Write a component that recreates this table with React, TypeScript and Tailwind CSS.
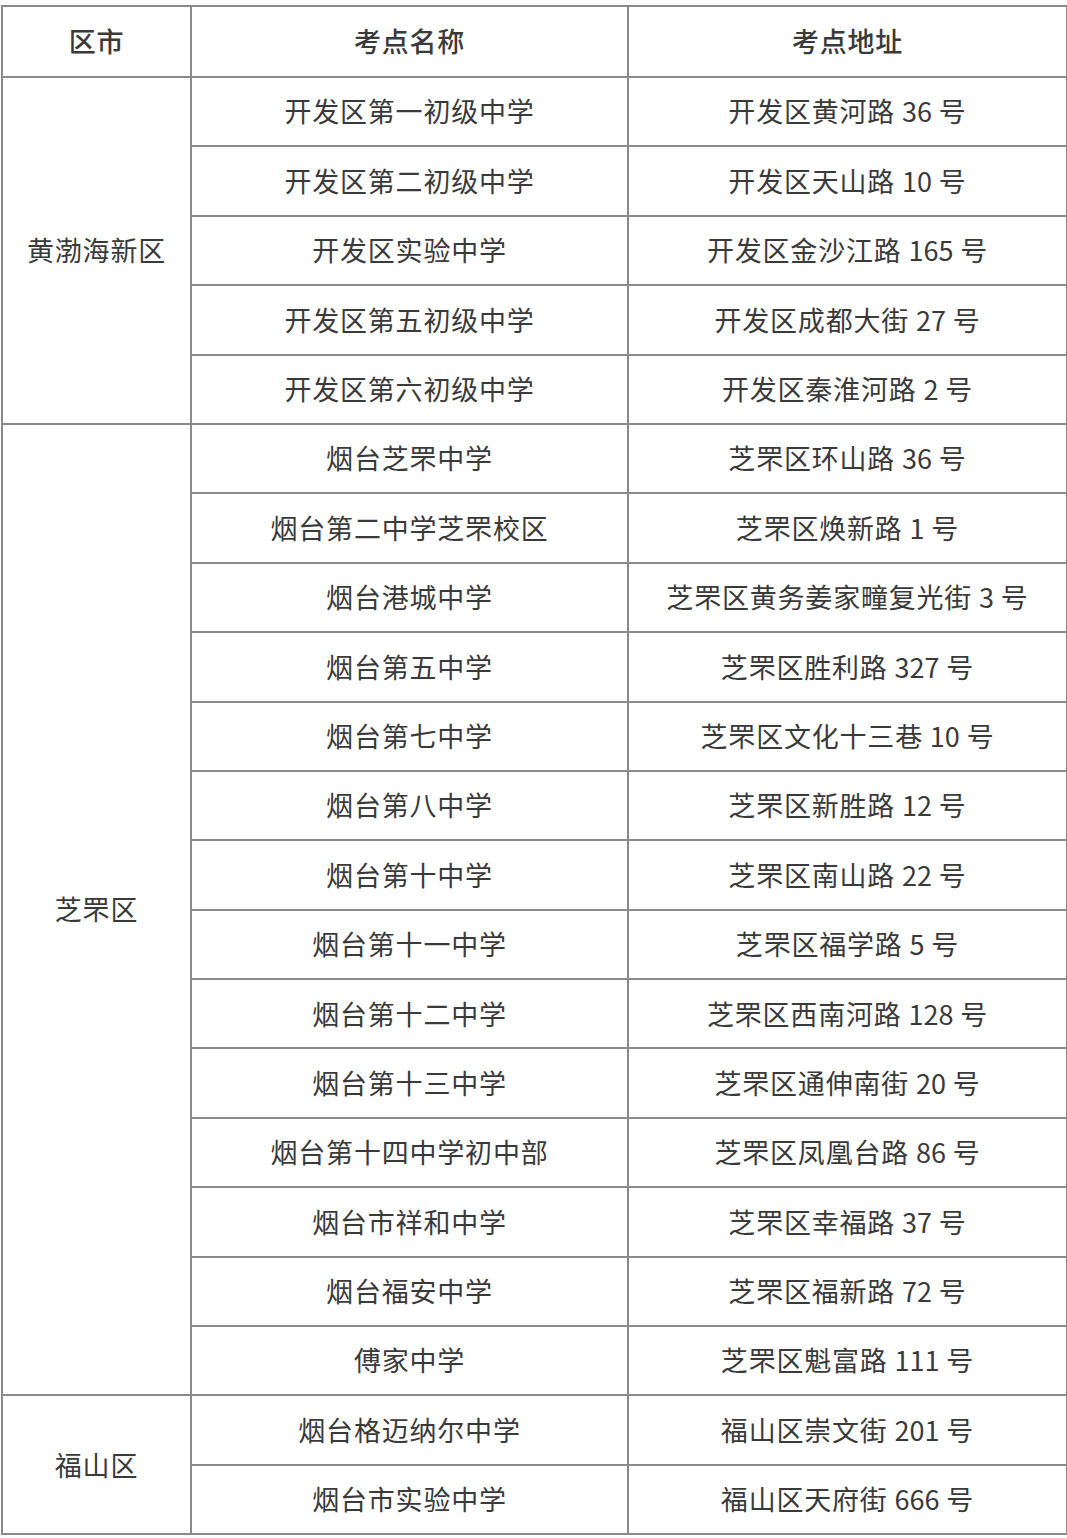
import React from "react";

const groups: { name: string; rows: [string, string][] }[] = [
  {
    name: "黄渤海新区",
    rows: [
      ["开发区第一初级中学", "开发区黄河路 36 号"],
      ["开发区第二初级中学", "开发区天山路 10 号"],
      ["开发区实验中学", "开发区金沙江路 165 号"],
      ["开发区第五初级中学", "开发区成都大街 27 号"],
      ["开发区第六初级中学", "开发区秦淮河路 2 号"],
    ],
  },
  {
    name: "芝罘区",
    rows: [
      ["烟台芝罘中学", "芝罘区环山路 36 号"],
      ["烟台第二中学芝罘校区", "芝罘区焕新路 1 号"],
      ["烟台港城中学", "芝罘区黄务姜家疃复光街 3 号"],
      ["烟台第五中学", "芝罘区胜利路 327 号"],
      ["烟台第七中学", "芝罘区文化十三巷 10 号"],
      ["烟台第八中学", "芝罘区新胜路 12 号"],
      ["烟台第十中学", "芝罘区南山路 22 号"],
      ["烟台第十一中学", "芝罘区福学路 5 号"],
      ["烟台第十二中学", "芝罘区西南河路 128 号"],
      ["烟台第十三中学", "芝罘区通伸南街 20 号"],
      ["烟台第十四中学初中部", "芝罘区凤凰台路 86 号"],
      ["烟台市祥和中学", "芝罘区幸福路 37 号"],
      ["烟台福安中学", "芝罘区福新路 72 号"],
      ["傅家中学", "芝罘区魁富路 111 号"],
    ],
  },
  {
    name: "福山区",
    rows: [
      ["烟台格迈纳尔中学", "福山区崇文街 201 号"],
      ["烟台市实验中学", "福山区天府街 666 号"],
    ],
  },
];

function Addr({ text }: { text: string }) {
  const [a, n, b] = text.split(" ");
  return (
    <>
      {a}{" "}
      <span className="tracking-normal">{n}</span>{" "}
      {b}
    </>
  );
}

export default function App() {
  return (
    <div
      className="w-[1067px] h-[1538px] bg-white pt-[5px] pl-[1px] text-[#3a3a3a] text-[27px] tracking-[0.8px]"
      style={{ fontFamily: '"Noto Sans CJK SC", "Noto Sans", sans-serif' }}
    >
      <table className="border-collapse table-fixed w-[1065px]">
        <colgroup>
          <col className="w-[189px]" />
          <col className="w-[437px]" />
          <col className="w-[439px]" />
        </colgroup>
        <thead>
          <tr className="h-[71px]">
            <th className="border-2 border-[#8a8a8a] font-medium text-center align-middle">区市</th>
            <th className="border-2 border-[#8a8a8a] font-medium text-center align-middle">考点名称</th>
            <th className="border-2 border-[#8a8a8a] font-medium text-center align-middle">考点地址</th>
          </tr>
        </thead>
        <tbody>
          {groups.map((g) =>
            g.rows.map((r, i) => (
              <tr key={g.name + i} className="h-[69.4px]">
                {i === 0 && (
                  <td
                    rowSpan={g.rows.length}
                    className="border-2 border-[#8a8a8a] text-center align-middle font-normal"
                  >
                    {g.name}
                  </td>
                )}
                <td className="border-2 border-[#8a8a8a] text-center align-middle">{r[0]}</td>
                <td className="border-2 border-[#8a8a8a] text-center align-middle">
                  <Addr text={r[1]} />
                </td>
              </tr>
            ))
          )}
        </tbody>
      </table>
    </div>
  );
}
